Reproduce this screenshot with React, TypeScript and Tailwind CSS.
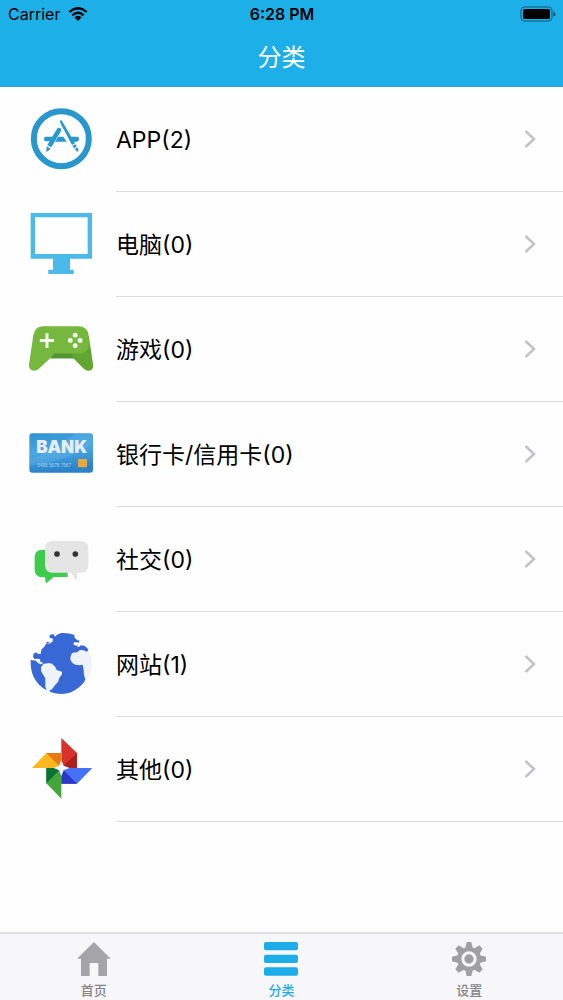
import type { ReactNode } from "react";

function AppStoreIcon() {
  return (
    <svg viewBox="0 0 192 192" className="size-16" aria-hidden="true">
      <circle cx="97" cy="95" r="82.5" fill="none" stroke="#2897cd" strokeWidth="18" />
      <g fill="#2897cd">
        <path d="M50 89h21l-8 14H50q-5 0-5-7t5-7zM88 89h15l10 15H78zM126 89h18q6 0 6 7t-6 8h-11z" />
        <path d="M84 66q4-6 10-2 5 3 2 8l-29 49-12-7zM53 118l12 7-9 8-4 1z" />
        <path d="M93 41q3-3 6 1l39 67-9 5-35-66zM130 117l9-5 4 6-7 6zM138 126l6-5 4 5v6l-4 2z" />
      </g>
    </svg>
  );
}

function ComputerIcon() {
  return (
    <svg viewBox="0 0 192 192" className="size-16" aria-hidden="true">
      <path
        fill="#49bae9"
        fillRule="evenodd"
        d="M5 3h184v137h-66v33h11v13H58v-13h14v-33H5zM18 16v110h158V16z"
      />
    </svg>
  );
}

function GameIcon() {
  return (
    <svg viewBox="39 21 194 192" className="size-16" aria-hidden="true">
      <path fill="#519632" d="M106 128h70v18h-72z" />
      <path
        fill="#62a632"
        d="M220 76L233 162Q236 181 220 183Q211 183 205 177L174 146L168 131L200 100Z"
      />
      <path
        fill="#76b83d"
        d="M84 48H188Q218 48 220 78L221 98Q220 131 188 131H116L104 144L68 178Q62 183 54 183Q38 182 39 164L52 76Q56 48 84 48Z"
      />
      <path fill="#f6fbf2" d="M89 69h9v18h17v9H98v18h-9V96H72v-9h17z" />
      <g fill="#f6fbf2">
        <circle cx="179" cy="75" r="7.5" />
        <circle cx="164" cy="91" r="7.5" />
        <circle cx="194" cy="91" r="7.5" />
        <circle cx="179" cy="107" r="7.5" />
      </g>
    </svg>
  );
}

function BankIcon() {
  return (
    <svg viewBox="0 0 192 192" className="size-16" aria-hidden="true">
      <defs>
        <linearGradient id="card" x1="0" y1="0" x2="0.2" y2="1">
          <stop offset="0" stopColor="#2f91d2" />
          <stop offset="0.5" stopColor="#4aa8e2" />
          <stop offset="1" stopColor="#2a82c9" />
        </linearGradient>
      </defs>
      <rect x="1" y="34" width="191" height="118" rx="9" fill="url(#card)" />
      <path fill="#68baeb" opacity="0.35" d="M1 112Q70 90 140 34h43q9 0 9 9v18Q120 120 1 130z" />
      <text
        x="98"
        y="94"
        textAnchor="middle"
        fill="#e6ecf1"
        fontFamily="Inter, sans-serif"
        fontWeight="900"
        fontSize="51"
      >
        BANK
      </text>
      <text
        x="25"
        y="136"
        fill="#a9d3ee"
        fontFamily="'Liberation Sans', Arial, sans-serif"
        fontSize="14"
      >
        5495 5678 7567
      </text>
      <rect x="147" y="111" width="27" height="25" rx="3" fill="#e7aa42" />
      <path stroke="#d69a38" strokeWidth="1.5" fill="none" d="M148 123h25" />
    </svg>
  );
}

function ChatIcon() {
  return (
    <svg viewBox="0 0 192 192" className="size-16" aria-hidden="true">
      <path
        fill="#3fcb4d"
        d="M40 68h76v82H74L53 168q-2 1-3-1l-2-16H40q-23-1-23-23V91q0-23 23-23z"
      />
      <path
        fill="#e5e5e6"
        d="M71 42h84q23 0 23 23v49q0 23-23 23h-11v20q-2 3-5 0l-13-20H71q-23 0-23-23V65q0-23 23-23z"
      />
      <circle cx="84" cy="81" r="8.5" fill="#343536" />
      <circle cx="139" cy="81" r="8.5" fill="#343536" />
    </svg>
  );
}

function GlobeIcon() {
  return (
    <svg viewBox="39 36 192 192" className="size-16" aria-hidden="true">
      <path
        fill="#edf3f8"
        d="M160 96L180 84L216 90Q226 106 228 130Q227 160 208 184L196 190L156 140ZM70 124L100 124L142 152L130 186L106 216L88 208L84 178L70 148Z"
      />
      <path
        fill="#3868d6"
        d="M101 45L112 42L117 50Q128 38 142 39Q160 39 176 45L175 52L183 60L191 62L188 68L176 66L172 71L175 76L186 77L180 83L175 84L178 94L168 100L164 108L163 118L168 128L178 134L190 136L200 134L203 150L204 165L208 178L204 187Q190 205 165 217Q136 227 103 216L101 211L108 208L118 194L126 186L130 174L138 163L138 155L122 150L118 141L108 131L98 129L82 132L75 142L75 152L80 162L88 175L88 200L92 211Q66 197 53 171Q43 150 44 120L60 122L66 129L74 133L83 129L73 125L72 118L65 116L56 117L51 111L52 102L60 97L66 101L74 102L76 89L86 79L90 72L104 70L100 67L92 72L91 66L98 65L102 69L109 66L112 57L101 53Z"
      />
      <path
        fill="#3868d6"
        d="M173 87L179 80L190 80L194 76L205 77L213 83L217 91L212 95L203 91L192 90L183 97L173 98Z"
      />
    </svg>
  );
}

function PinwheelIcon() {
  return (
    <svg viewBox="0 0 192 192" className="size-16" aria-hidden="true">
      <path fill="#d9322d" d="M97 3l47 45v45H97z" />
      <path fill="#aa211d" d="M144 48v45H97z" />
      <path fill="#4471f5" d="M97 93h93l-46 47H97z" />
      <path fill="#2939c4" d="M97 93l47 47H97z" />
      <path fill="#43a53a" d="M52 93h45v92l-45-46z" />
      <path fill="#0b7137" d="M52 93h45l-45 46z" />
      <path fill="#fcb61f" d="M9 93l43-45h45v45z" />
      <path fill="#e87912" d="M52 48h45v45z" />
      <path fill="#f1f5fc" d="M97 69l7 17 18 7-18 7-7 17-7-17-16-7 16-7z" />
    </svg>
  );
}

function WifiIcon() {
  return (
    <svg viewBox="0 0 60 42" className="h-[14px] w-5" aria-label="Wi-Fi">
      <g fill="none" stroke="#000" strokeWidth="7">
        <path d="M4 15Q30-8 56 15" />
        <path d="M13 25Q30 10 47 25" />
      </g>
      <path d="M19 31q11-9 22 0L30 42z" />
    </svg>
  );
}

function BatteryIcon() {
  return (
    <svg viewBox="0 0 36 16" className="h-4 w-9" aria-label="Battery">
      <rect x="1" y="1" width="31" height="14" rx="3.5" fill="none" stroke="#000" strokeOpacity="0.5" />
      <rect x="3" y="3" width="27" height="10" rx="1.5" />
      <path d="M33.5 5.5q2 1 2 2.500t-2 2.500z" opacity="0.6" />
    </svg>
  );
}

function HomeIcon() {
  return (
    <svg viewBox="0 0 102 102" className="size-[34px]" fill="#a5a4a8" aria-hidden="true">
      <path d="M51 0l50 50H90v52H64V63H38v39H12V50H0z" />
    </svg>
  );
}

function ListIcon() {
  return (
    <svg viewBox="0 0 102 102" className="size-[34px]" fill="#1dade8" aria-hidden="true">
      <rect y="0" width="102" height="25" rx="6" />
      <rect y="38" width="102" height="25" rx="6" />
      <rect y="76" width="102" height="25" rx="6" />
    </svg>
  );
}

function GearIcon() {
  const teeth = [0, 45, 90, 135, 180, 225, 270, 315];
  return (
    <svg viewBox="0 0 102 102" className="size-[34px]" aria-hidden="true">
      <g fill="#a0a0a3">
        {teeth.map((angle) => (
          <path key={angle} d="M39 20l5-20h14l5 20z" transform={`rotate(${angle} 51 51)`} />
        ))}
        <circle cx="51" cy="51" r="36" />
      </g>
      <circle cx="51" cy="51" r="18.5" fill="#a0a0a3" stroke="#f7f6f9" strokeWidth="9" />
    </svg>
  );
}

const categories: { name: string; count: number; icon: ReactNode }[] = [
  { name: "APP", count: 2, icon: <AppStoreIcon /> },
  { name: "电脑", count: 0, icon: <ComputerIcon /> },
  { name: "游戏", count: 0, icon: <GameIcon /> },
  { name: "银行卡/信用卡", count: 0, icon: <BankIcon /> },
  { name: "社交", count: 0, icon: <ChatIcon /> },
  { name: "网站", count: 1, icon: <GlobeIcon /> },
  { name: "其他", count: 0, icon: <PinwheelIcon /> },
];

const tabs: { name: string; icon: ReactNode; active?: boolean }[] = [
  { name: "首页", icon: <HomeIcon /> },
  { name: "分类", icon: <ListIcon />, active: true },
  { name: "设置", icon: <GearIcon /> },
];

export default function App() {
  return (
    <div className="flex min-h-screen flex-col bg-[#fefefe] font-['Inter','Noto_Sans_CJK_SC',sans-serif] text-black">
      <header className="border-b border-[#3a9cc8] bg-[#1dafe8]">
        <div className="grid h-7 grid-cols-3 items-center pr-[7px] pl-2 text-base">
          <div className="flex items-center gap-2">
            <span>Carrier</span>
            <WifiIcon />
          </div>
          <span className="text-center font-semibold">6:28 PM</span>
          <span className="flex justify-end">
            <BatteryIcon />
          </span>
        </div>
        <h1 className="h-[58px] text-center text-2xl leading-[60px] font-normal text-white">分类</h1>
      </header>

      <main className="flex-1">
        <ul>
          {categories.map(({ name, count, icon }) => (
            <li key={name}>
              <a href="#" className="flex items-stretch pl-[29px]">
                <span className="flex items-center pr-[23px] pb-px">{icon}</span>
                <span className="flex h-[105px] flex-1 items-center justify-between border-b border-[#dcdcde] pr-[27px]">
                  <span className="pt-0.5 text-[23px] leading-8">
                    {name}({count})
                  </span>
                  <svg
                    viewBox="0 0 12 20"
                    className="h-5 w-3"
                    fill="none"
                    stroke="#c3c3c7"
                    strokeWidth="2.5"
                    aria-hidden="true"
                  >
                    <path d="M1.5 2l8.500 8-8.500 8" />
                  </svg>
                </span>
              </a>
            </li>
          ))}
        </ul>
      </main>

      <nav className="grid grid-cols-3 border-t-2 border-[#dfdfe3] bg-[#f7f6f9]">
        {tabs.map(({ name, icon, active }) => (
          <button
            key={name}
            type="button"
            aria-current={active ? "page" : undefined}
            className={`flex flex-col items-center gap-1 pt-2 text-[13px] leading-5 font-medium ${
              active ? "text-[#1dade8]" : "text-[#858588]"
            }`}
          >
            {icon}
            {name}
          </button>
        ))}
      </nav>
    </div>
  );
}
